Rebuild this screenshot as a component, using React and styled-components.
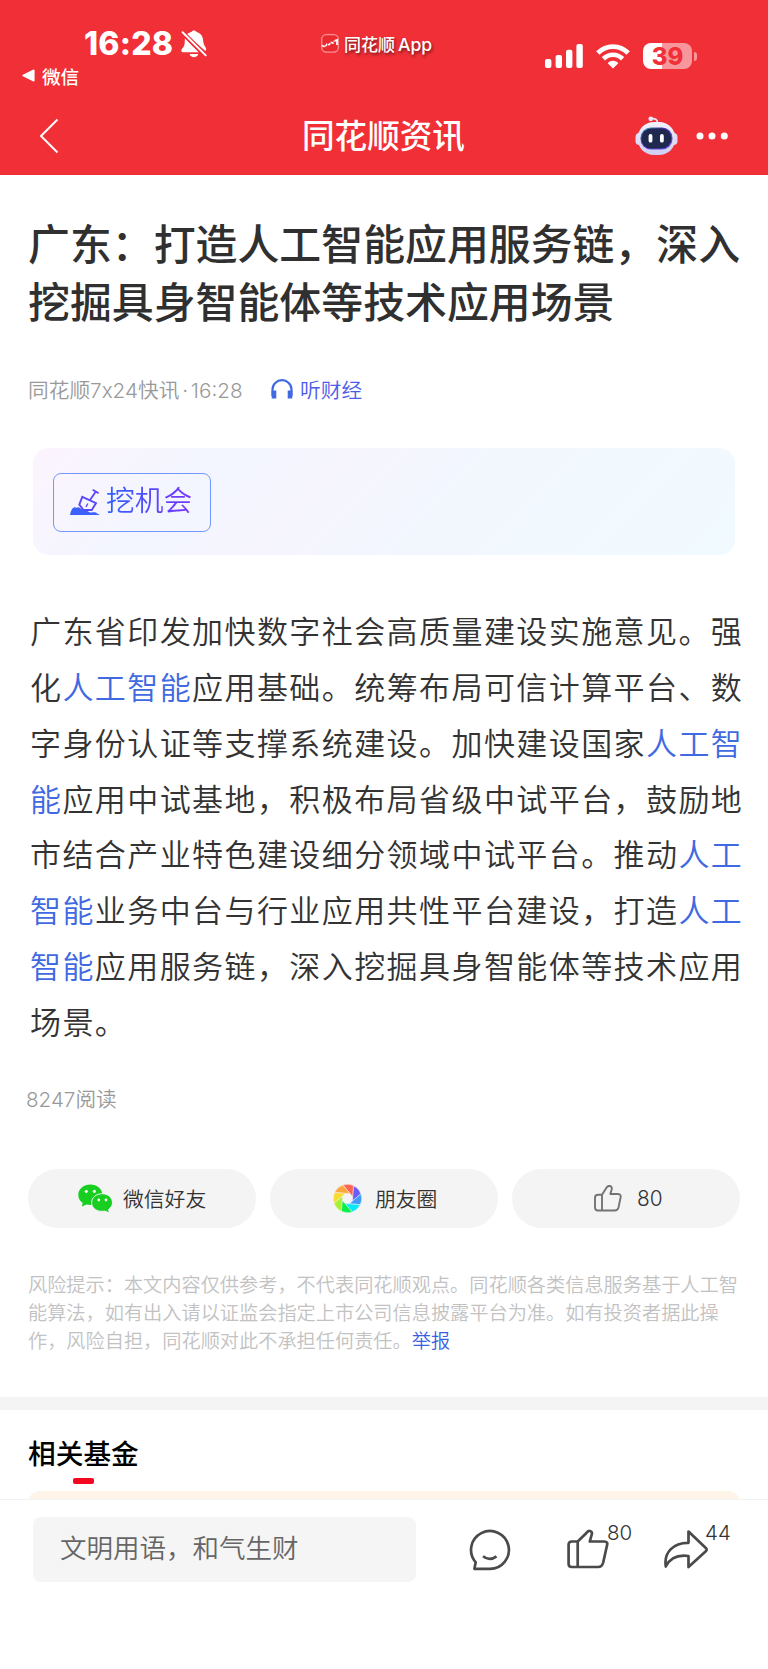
import styled, { createGlobalStyle, css } from 'styled-components';

const GlobalStyle = createGlobalStyle`
    * {
        box-sizing: border-box;
    }
    body {
        margin: 0;
        background: #fff;
        font-family: Inter, "Noto Sans CJK SC", sans-serif;
        font-weight: 350;
        color: #333;
    }
    h1, h2, p {
        margin: 0;
    }
    svg {
        display: block;
        flex-shrink: 0;
    }
`
const Page = styled.div`
    width: 768px;
    height: 1669px;
    display: flex;
    flex-direction: column;
    overflow: hidden;
    white-space: nowrap;
`

/* Header */
const Header = styled.header`
    height: 175px;
    background: #f12f37;
    color: #fff;
`
const StatusBar = styled.div`
    height: 98px;
    display: grid;
    grid-template-columns: 321px 1fr 223px;
    align-items: start;
`
const StatusLeft = styled.div`
    display: flex;
    flex-direction: column;
    padding-top: 26px;
`
const ClockRow = styled.div`
    display: flex;
    align-items: center;
    height: 36px;
    padding-left: 84px;
    gap: 8px;
`
const Clock = styled.span`
    width: 89px;
    font-size: 32px;
    font-weight: 800;
    line-height: 36px;
    letter-spacing: 0.2px;
`
const BackApp = styled.div`
    display: flex;
    align-items: center;
    gap: 7px;
    height: 30px;
    margin-top: -2px;
    padding-left: 22px;
    font-size: 18.6px;
    font-weight: 500;
`
const StatusApp = styled.div`
    display: flex;
    align-items: center;
    gap: 5px;
    height: 30px;
    margin-top: 28px;
    font-size: 17px;
    font-weight: 500;
    text-shadow: 1px 2px 3px rgba(0, 0, 0, 0.5);
`
const AppWord = styled.span`
    margin-left: 3px;
    font-size: 17.6px;
`
const StatusRight = styled.div`
    display: flex;
    align-items: center;
    padding-top: 43px;
    height: 69px;
`
const Battery = styled.div`
    width: 49px;
    height: 26px;
    margin-left: 13px;
    border-radius: 8px;
    background: linear-gradient(to right, #fff 19px, #f8979b 19px);
    color: #f12f37;
    font-size: 24px;
    font-weight: 800;
    line-height: 27px;
    text-align: center;
`
const BatteryTip = styled.div`
    width: 3px;
    height: 9px;
    margin-left: 2px;
    border-radius: 0 3px 3px 0;
    background: #f8979b;
`
const NavBar = styled.nav`
    height: 75px;
    display: grid;
    grid-template-columns: 302px 1fr 133px;
    align-items: center;
`
const BackButton = styled.div`
    padding-left: 39px;
`
const NavTitle = styled.div`
    font-size: 32.6px;
    font-weight: 500;
    line-height: 40px;
`
const NavActions = styled.div`
    display: flex;
    align-items: center;
    gap: 17px;
`

/* Article */
const Article = styled.main`
    height: 1222px;
    flex-shrink: 0;
    padding: 41px 28px 0;
`
const Title = styled.h1`
    font-size: 41.9px;
    font-weight: 500;
    line-height: 58px;
    color: #303030;
`
const Meta = styled.div`
    display: flex;
    align-items: center;
    height: 30px;
    margin-top: 42px;
    font-size: 20.7px;
    color: #999;
`
const Source = styled.span`
    width: 243px;
    word-spacing: -3px;
`
const Listen = styled.span`
    display: flex;
    align-items: center;
    gap: 7px;
    color: #4a5be8;
`
const DigCard = styled.section`
    display: flex;
    align-items: center;
    height: 107px;
    margin: 44px 5px 0;
    padding: 2px 0 0 20px;
    border-radius: 16px;
    background: linear-gradient(135deg, #fcf4fe 0%, #f3f6ff 24%, #f6f5fe 40%, #f2f7fe 60%, #f1faff 100%);
`
const DigButton = styled.div`
    display: flex;
    align-items: center;
    gap: 6px;
    width: 158px;
    height: 59px;
    padding-left: 16px;
    border: 1px solid #7297ff;
    border-radius: 8px;
`
const DigLabel = styled.span`
    font-size: 28.8px;
    line-height: 40px;
    margin-top: -4px;
    background: linear-gradient(to right, #2f62fb, #7a35fb);
    background-clip: text;
    color: transparent;
`
const Body = styled.p`
    margin: 49px 0 0 2px;
    font-size: 31px;
    line-height: 55.85px;
    letter-spacing: 1.42px;
`
const Link = styled.span`
    color: #4169e1;
`
const Reads = styled.div`
    height: 30px;
    margin: 34px 0 0 -2px;
    font-size: 20.6px;
    line-height: 30px;
    color: #999;
`
const Shares = styled.div`
    display: grid;
    grid-template-columns: repeat(3, 228px);
    gap: 14px;
    margin-top: 54px;
`
const Pill = styled.div`
    display: flex;
    align-items: center;
    height: 59px;
    padding-left: ${(props) => props.$indent}px;
    gap: ${(props) => props.$gap}px;
    border-radius: 30px;
    background: #f4f4f4;
    font-size: 20.8px;
`
const Risk = styled.p`
    margin-top: 43px;
    font-size: 19.2px;
    line-height: 28px;
    color: #c2c2c2;
`
const Report = styled.span`
    color: #3a5fe0;
`

/* Related funds */
const Divider = styled.div`
    height: 13px;
    flex-shrink: 0;
    background: #f4f4f4;
`
const Related = styled.section`
    height: 89px;
    flex-shrink: 0;
    padding: 24px 28px 0;
    overflow: hidden;
`
const RelatedTitle = styled.h2`
    font-size: 27.7px;
    font-weight: 500;
    line-height: 40px;
    color: #000;
`
const Underline = styled.div`
    width: 21px;
    height: 6px;
    margin: 4px 0 0 45px;
    border-radius: 2px;
    background: #f4071f;
`
const FundCard = styled.div`
    height: 40px;
    margin-top: 7px;
    border-radius: 12px;
    background: #fef4e8;
`

/* Bottom bar */
const BottomBar = styled.footer`
    display: flex;
    align-items: flex-start;
    flex: 1;
    padding: 17px 0 0 33px;
    border-top: 1px solid #f3f3f3;
    background: #fff;
`
const CommentInput = styled.div`
    width: 383px;
    height: 65px;
    padding-left: 27px;
    border-radius: 8px;
    background: #f5f5f5;
    color: #666;
    font-size: 26.5px;
    line-height: 63px;
`
const Action = styled.div`
    display: flex;
    align-items: flex-start;
    height: 50px;
    margin-top: 12px;
    ${(props) => props.$left && css`
        margin-left: ${props.$left}px;
    `}
`
const Count = styled.span`
    width: 26px;
    margin: -6px 0 0 ${(props) => props.$shift || -2}px;
    font-size: 20.5px;
    line-height: 20px;
`

const TEXT = [
    ['广东省印发加快数字社会高质量建设实施意见。强'],
    ['化', '人工智能', '应用基础。统筹布局可信计算平台、数'],
    ['字身份认证等支撑系统建设。加快建设国家', '人工智'],
    ['', '能', '应用中试基地，积极布局省级中试平台，鼓励地'],
    ['市结合产业特色建设细分领域中试平台。推动', '人工'],
    ['', '智能', '业务中台与行业应用共性平台建设，打造', '人工'],
    ['', '智能', '应用服务链，深入挖掘具身智能体等技术应用'],
    ['场景。'],
]

const PETALS = ['#fd6550', '#6c5bfb', '#3f9bfb', '#06e8f8', '#06f04a', '#a4f231', '#f8dc32', '#fca63f']

const BellOff = () => (
    <svg width="26" height="28" viewBox="0 0 26 28" fill="#fff">
        <path d="M5.5 4.4C7.4 2.8 9.3 2.2 10.5 1.9C11.3-.1 14.7-.1 15.6 1.9C19.6 2.9 21.9 6 22.1 10.3C22.3 15.5 25.2 17.1 25.2 19.5Q25.2 20.4 24.4 21Z" />
        <path d="M3.8 8.2L17.7 22.2H1.7C.1 22.2-.1 20.3.9 19.1C3.5 16.2 3.9 14.7 3.8 8.2Z" />
        <path d="M8.6 24H17.3C16.4 28.2 9.5 28.2 8.6 24Z" />
        <path d="M1.2 2L25 26" stroke="#f12f37" strokeWidth="4.4" />
        <path d="M1.6 2.2L24.7 25.4" stroke="#fff" strokeWidth="2" strokeLinecap="round" />
    </svg>
)

const AppIcon = () => (
    <svg width="18" height="19" viewBox="0 0 18 19" fill="none">
        <rect x=".7" y=".7" width="16.6" height="17.4" rx="4.5" fill="#e92b31" stroke="#f79094" strokeWidth="1.3" />
        <path d="M1 11.5L4 12.8L6 10.2L8 10.7L10 8.5L12 9L13.2 7" stroke="#fff" strokeWidth="1.6" strokeDasharray="3 .8" />
        <path d="M13.6 6.8L16 6V11" stroke="#fff" strokeWidth="1.8" />
    </svg>
)

const Signal = () => (
    <svg width="38" height="24" viewBox="0 0 38 24" fill="#fff">
        <rect y="15" width="6.4" height="9" rx="2" />
        <rect x="10.6" y="11" width="6.4" height="13" rx="2" />
        <rect x="21" y="5.8" width="6.4" height="18.2" rx="2" />
        <rect x="31.4" width="6.4" height="24" rx="2" />
    </svg>
)

const Wifi = () => (
    <svg width="34" height="25" viewBox="0 0 34 25" fill="none" stroke="#fff" strokeWidth="4.7">
        <path d="M1.8 9C10.3 .4 23.7 .4 32.2 9" />
        <path d="M7.4 14.8C12.9 9.4 21.1 9.4 26.6 14.8" />
        <path d="M17 24.4L11.7 19.2C14.6 16 19.4 16 22.3 19.2Z" fill="#fff" stroke="none" />
    </svg>
)

const Robot = () => (
    <svg width="43" height="40" viewBox="0 0 43 40">
        <defs>
            <linearGradient id="shell" x1="0" y1="0" x2="0" y2="1">
                <stop offset="0" stopColor="#f4f2fc" />
                <stop offset="1" stopColor="#cfcdf2" />
            </linearGradient>
            <linearGradient id="visor" x1="0" y1="0" x2="1" y2="1">
                <stop offset="0" stopColor="#3ab7c8" />
                <stop offset=".35" stopColor="#5131a8" />
                <stop offset="1" stopColor="#6d55ff" />
            </linearGradient>
        </defs>
        <path d="M16 2.7C20 2 22.5 3.5 22.5 7" fill="none" stroke="#e9e4f7" strokeWidth="1.7" />
        <circle cx="15.8" cy="2.8" r="2.4" fill="#e9e4f7" />
        <rect x=".5" y="17" width="8" height="12" rx="4" fill="#dedcf5" />
        <rect x="34.5" y="17" width="8" height="12" rx="4" fill="#dedcf5" />
        <rect x="2.5" y="6" width="38" height="33" rx="16.5" fill="url(#shell)" />
        <rect x="5.5" y="11.5" width="32" height="22" rx="10.5" fill="url(#visor)" />
        <rect x="6.4" y="12.4" width="30" height="20.2" rx="10" fill="#1f2950" />
        <rect x="13.6" y="18" width="3.8" height="8.6" rx="1.9" fill="#fff" />
        <rect x="25" y="18" width="3.8" height="8.6" rx="1.9" fill="#fff" />
    </svg>
)

const Headphones = () => (
    <svg width="22" height="20" viewBox="0 0 22 20" fill="none" stroke="#4169e1">
        <path d="M1.5 17V10.5A9.4 9.2 0 0 1 20.5 10.5V17" strokeWidth="2.2" />
        <path d="M3 11.5V19.5M19 11.5V19.5" strokeWidth="4.6" />
    </svg>
)

const Shovel = () => (
    <svg width="30" height="27" viewBox="0 0 30 27" fill="none">
        <path d="M22.7 .8L28.6 4.3M25.7 2.7L20 11M12.3 7.8L26 14.1L21.8 21H13.5L9.3 15.7Z" stroke="#5b49f5" strokeWidth="1.9" />
        <path d="M16 18L17.8 14.5" stroke="#5b49f5" strokeWidth="1.4" />
        <path d="M0 26C.8 21 3 17.6 5.7 18.5C7 19.2 8 17.5 10 19C12 21.5 16.5 20.5 19 23C22 24.5 25 22 27 24.5L30 26Z" fill="#3d5ffc" />
    </svg>
)

const Wechat = () => (
    <svg width="35" height="29" viewBox="0 0 35 29">
        <path d="M12.3 .5C5.6 .5 .3 5 .3 10.9C.3 14.3 2 17 4.7 18.8L3.9 22.6L8.6 20.6C17 22.6 24.4 17.5 24.4 10.9C24.4 5 19 .5 12.3 .5Z" fill="#18cf21" />
        <path d="M24.3 9.7C18.2 9.7 13.6 13.6 13.6 18.7C13.6 24.6 19.8 28.5 26.5 27.1L31.3 28.8L30.6 25.4C33 23.8 34.5 21.4 34.5 18.7C34.5 13.7 30 9.7 24.3 9.7Z" fill="#18cf21" stroke="#f4f4f4" strokeWidth="1" />
        <g fill="#f4f4f4">
            <circle cx="8.3" cy="7.3" r="1.6" />
            <circle cx="16.4" cy="7.3" r="1.6" />
            <circle cx="20.8" cy="16" r="1.4" />
            <circle cx="28" cy="16" r="1.4" />
        </g>
    </svg>
)

const Moments = () => (
    <svg width="29" height="29" viewBox="-14.5 -14.5 29 29">
        {PETALS.map((color, i) => (
            <path
                key={color}
                d="M-4.7 -13.4A14.2 14.2 0 0 1 6.2 -12.8L5.3 -1.8L2.5 -5Z"
                fill={color}
                stroke="#f4f4f4"
                strokeWidth=".5"
                transform={`rotate(${i * 45})`}
            />
        ))}
    </svg>
)

const Like = () => (
    <svg width="28" height="27" viewBox="0 0 28 27" fill="none" stroke="#737373" strokeWidth="1.9" strokeLinejoin="round">
        <path d="M8 9.8L12 3.5C13.5-.5 19 .4 17.6 4.8L16.3 9H24Q27.3 9.3 26.6 12.5L24.5 22.5Q23.7 25.5 20.7 25.5H4Q1 25.5 1 22.5V12.7Q1 9.8 4 9.8H8V25.5" />
    </svg>
)

const BigLike = () => (
    <svg width="42" height="40" viewBox="0 0 42 40" fill="none" stroke="#4a4a4a" strokeWidth="2.7" strokeLinejoin="round">
        <path d="M10.7 12.5L19.2 4.3C22-.2 26 2.5 24.6 6L22.8 12.5H37.5Q41 12.7 40.1 16L36.2 33.5Q35 38 31 38H4.8Q1.6 38 1.6 34.8V15.7Q1.6 12.5 4.8 12.5H10.7V38" />
    </svg>
)

const Smile = () => (
    <svg width="42" height="42" viewBox="0 0 42 42" fill="none" stroke="#4a4a4a" strokeWidth="2.7" strokeLinejoin="round">
        <path d="M6.7 33.3A18.9 18.9 0 1 1 21 39.8H5.4L6.7 33.3Z" />
        <path d="M14 27.3Q20.5 32.5 27.5 27.3" />
    </svg>
)

const Share = () => (
    <svg width="45" height="41" viewBox="0 0 45 41" fill="none" stroke="#4a4a4a" strokeWidth="2.7" strokeLinejoin="round">
        <path d="M24.5 2.5L41.8 19Q43.5 20.7 41.8 22.3L24.5 38V27C13.5 25.5 6 29 1.8 37.5C-.5 23 10 13.5 24.5 13.8Z" />
    </svg>
)

const App = () => {
    return (
        <Page>
            <GlobalStyle />
            <Header>
                <StatusBar>
                    <StatusLeft>
                        <ClockRow>
                            <Clock>16:28</Clock>
                            <BellOff />
                        </ClockRow>
                        <BackApp>
                            <svg width="13" height="13" viewBox="0 0 13 13">
                                <path d="M1.2 6.5L11.8 1.3V11.7Z" fill="#fff" stroke="#fff" strokeWidth="1.6" strokeLinejoin="round" />
                            </svg>
                            微信
                        </BackApp>
                    </StatusLeft>
                    <StatusApp>
                        <AppIcon />
                        <span>同花顺<AppWord>App</AppWord></span>
                    </StatusApp>
                    <StatusRight>
                        <Signal />
                        <svg width="13" height="1" />
                        <Wifi />
                        <Battery>39</Battery>
                        <BatteryTip />
                    </StatusRight>
                </StatusBar>
                <NavBar>
                    <BackButton>
                        <svg width="20" height="36" viewBox="0 0 20 36" fill="none" stroke="#fff" strokeWidth="2">
                            <path d="M18.5 1.5L2 18L18.5 34.5" />
                        </svg>
                    </BackButton>
                    <NavTitle>同花顺资讯</NavTitle>
                    <NavActions>
                        <Robot />
                        <svg width="34" height="8" viewBox="0 0 34 8" fill="#fff">
                            <circle cx="5" cy="4" r="3.5" />
                            <circle cx="17" cy="4" r="3.5" />
                            <circle cx="29.3" cy="4" r="3.5" />
                        </svg>
                    </NavActions>
                </NavBar>
            </Header>
            <Article>
                <Title>
                    广东：打造人工智能应用服务链，深入
                    <br />
                    挖掘具身智能体等技术应用场景
                </Title>
                <Meta>
                    <Source>同花顺7x24快讯 · 16:28</Source>
                    <Listen>
                        <Headphones />
                        听财经
                    </Listen>
                </Meta>
                <DigCard>
                    <DigButton>
                        <Shovel />
                        <DigLabel>挖机会</DigLabel>
                    </DigButton>
                </DigCard>
                <Body>
                    {TEXT.map((line, i) => (
                        <span key={i}>
                            {line.map((part, j) => (j % 2 ? <Link key={j}>{part}</Link> : part))}
                            <br />
                        </span>
                    ))}
                </Body>
                <Reads>8247阅读</Reads>
                <Shares>
                    <Pill $indent={50} $gap={10}>
                        <Wechat />
                        微信好友
                    </Pill>
                    <Pill $indent={63} $gap={13}>
                        <Moments />
                        朋友圈
                    </Pill>
                    <Pill $indent={82} $gap={15}>
                        <Like />
                        80
                    </Pill>
                </Shares>
                <Risk>
                    风险提示：本文内容仅供参考，不代表同花顺观点。同花顺各类信息服务基于人工智
                    <br />
                    能算法，如有出入请以证监会指定上市公司信息披露平台为准。如有投资者据此操
                    <br />
                    作，风险自担，同花顺对此不承担任何责任。<Report>举报</Report>
                </Risk>
            </Article>
            <Divider />
            <Related>
                <RelatedTitle>相关基金</RelatedTitle>
                <Underline />
                <FundCard />
            </Related>
            <BottomBar>
                <CommentInput>文明用语，和气生财</CommentInput>
                <Action $left={53}>
                    <Smile />
                </Action>
                <Action $left={56}>
                    <BigLike />
                    <Count>80</Count>
                </Action>
                <Action $left={31}>
                    <Share />
                    <Count $shift={-4}>44</Count>
                </Action>
            </BottomBar>
        </Page>
    )
}

export default App;
